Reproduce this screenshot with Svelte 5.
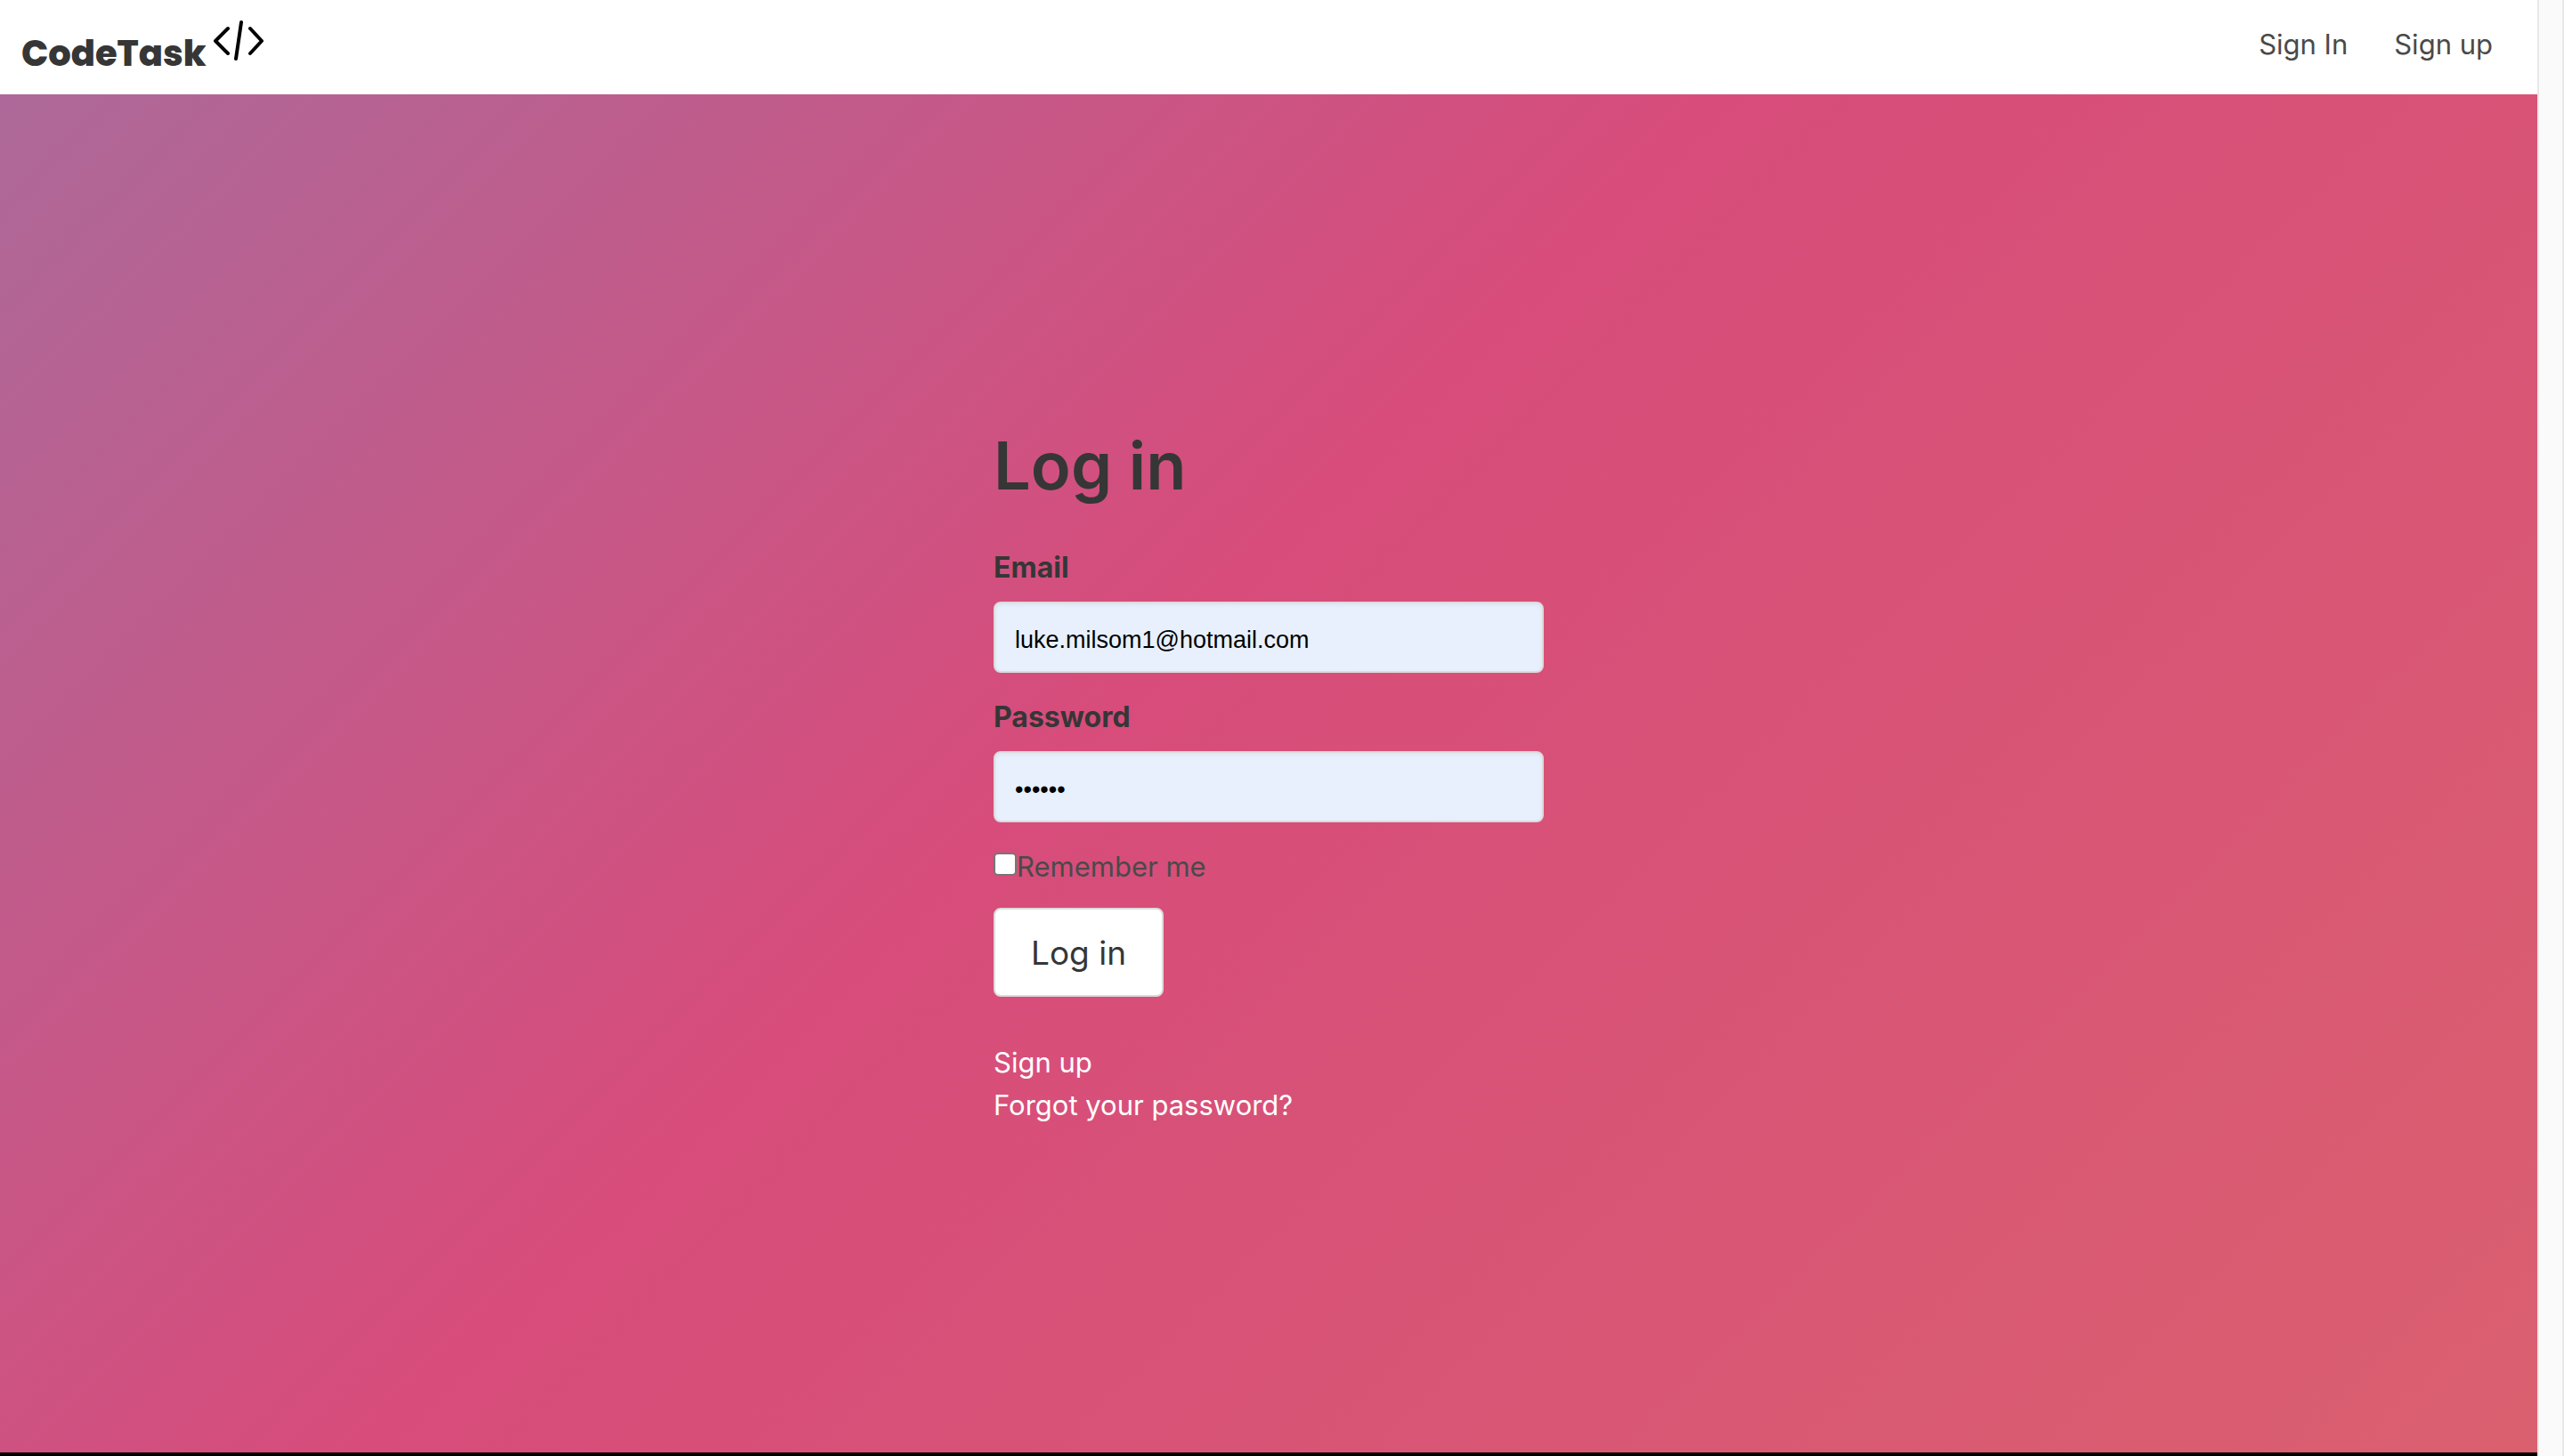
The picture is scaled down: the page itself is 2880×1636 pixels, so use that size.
<script>
  let email = $state('luke.milsom1@hotmail.com');
  let password = $state('secret');
  let remember = $state(false);
</script>

<div class="page">
  <header>
    <a class="brand" href="#home">
      <span>CodeTask</span>
      <svg viewBox="0 0 60 48" aria-hidden="true">
        <path d="M18 12 4 26l14 14M43 12l13 14-13 14M33 5 27 46" />
      </svg>
    </a>
    <nav>
      <a href="#signin">Sign In</a>
      <a href="#signup">Sign up</a>
    </nav>
  </header>
  <main>
    <form onsubmit={(e) => e.preventDefault()}>
      <h1>Log in</h1>
      <div class="field">
        <label class="label" for="email">Email</label>
        <input class="input" id="email" type="email" bind:value={email} />
      </div>
      <div class="field">
        <label class="label" for="password">Password</label>
        <input class="input" id="password" type="password" bind:value={password} />
      </div>
      <label class="remember"><input type="checkbox" bind:checked={remember} />Remember me</label>
      <button type="submit">Log in</button>
      <div class="links">
        <a href="#signup">Sign up</a>
        <a href="#forgot">Forgot your password?</a>
      </div>
    </form>
  </main>
  <div class="gutter"></div>
</div>

<style>
  :global(body) {
    background: #000;
  }
  .page {
    display: grid;
    grid-template-columns: 1fr 30px;
    grid-template-rows: auto 1fr;
    min-height: 100vh;
    font-family: Inter, 'Liberation Sans', sans-serif;
    font-size: 31px;
    line-height: 48px;
    color: #4a4a4a;
  }
  a {
    color: inherit;
    text-decoration: none;
  }
  header {
    display: flex;
    justify-content: space-between;
    align-items: flex-start;
    height: 106px;
    background: #fff;
  }
  .brand {
    display: flex;
    align-items: flex-start;
    gap: 6px;
    padding: 20px 24px;
    color: #363636;
    font-family: Poppins, Inter, sans-serif;
    font-size: 40px;
    font-weight: 800;
    line-height: 80px;
  }
  .brand svg {
    width: 60px;
    height: 48px;
    fill: none;
    stroke: #000;
    stroke-width: 4;
    stroke-linecap: round;
    stroke-linejoin: round;
    overflow: visible;
  }
  nav {
    display: flex;
    gap: 52px;
    padding: 26px 50px;
  }
  main {
    grid-row: 2;
    display: flex;
    align-items: center;
    justify-content: center;
    margin-bottom: 4px;
    padding-top: 6px;
    background: linear-gradient(135deg, #ad6999 0%, #d74c7b 44%, #da606f 100%);
  }
  .gutter {
    grid-column: 2;
    grid-row: 1 / 3;
    border: solid #e8e8e8;
    border-width: 0 2px;
    background: #fafafa;
  }
  form {
    display: flex;
    flex-direction: column;
    align-items: flex-start;
    gap: 26px;
    width: 618px;
  }
  h1 {
    margin: 0 0 20px;
    color: #363636;
    font-size: 74px;
    font-weight: 600;
    line-height: 90px;
  }
  .field {
    display: flex;
    flex-direction: column;
    gap: 14px;
    width: 100%;
  }
  .label {
    color: #363636;
    font-size: 32px;
    font-weight: 700;
  }
  .input {
    box-sizing: border-box;
    width: 100%;
    height: 80px;
    padding: 6px 22px 0;
    border: 2px solid #dbdbdb;
    border-radius: 8px;
    background: #e8f0fe;
    box-shadow: inset 0 2px 4px rgb(10 10 10 / 5%);
    color: #000;
    font-family: 'Liberation Sans', Arial, sans-serif;
    font-size: 27px;
  }
  .remember {
    display: flex;
    align-items: flex-start;
    margin-bottom: -4px;
  }
  .remember input {
    appearance: none;
    box-sizing: border-box;
    width: 26px;
    height: 26px;
    margin: 8px 0 0;
    border: 2px solid #767676;
    border-radius: 5px;
    background: #fff;
  }
  .remember input:checked {
    background: #1a73e8;
  }
  button {
    height: 100px;
    padding: 0 40px;
    border: 2px solid #dbdbdb;
    border-radius: 8px;
    background: #fff;
    color: #363636;
    font-family: inherit;
    font-size: 37px;
  }
  .links {
    display: flex;
    flex-direction: column;
    align-items: flex-start;
    padding-top: 24px;
    color: #fff;
  }
</style>
